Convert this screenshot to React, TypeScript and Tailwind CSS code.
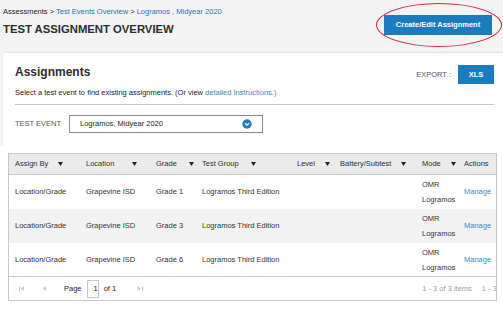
import React from 'react';

const rows = [
  { by: 'Location/Grade', loc: 'Grapevine ISD', grade: 'Grade 1', group: 'Logramos Third Edition' },
  { by: 'Location/Grade', loc: 'Grapevine ISD', grade: 'Grade 3', group: 'Logramos Third Edition' },
  { by: 'Location/Grade', loc: 'Grapevine ISD', grade: 'Grade 6', group: 'Logramos Third Edition' },
];

const cols = 'grid grid-cols-[71px_70px_46px_95px_43px_82px_42px_60px]';

function SortArrow({ gap = 'ml-[10px]' }: { gap?: string }) {
  return (
    <svg width="5" height="4" viewBox="0 0 5 4" className={`${gap} shrink-0`}>
      <path d="M0 0 H5 L2.5 4 Z" fill="#222" />
    </svg>
  );
}

function HeaderCell({ label, gap, arrow = true }: { label: string; gap?: string; arrow?: boolean }) {
  return (
    <div className="flex items-center pl-[6px] whitespace-nowrap">
      <span>{label}</span>
      {arrow && <SortArrow gap={gap} />}
    </div>
  );
}

function PagerIcon({ kind }: { kind: 'first' | 'prev' | 'next' }) {
  return (
    <svg width="6" height="5" viewBox="0 0 6 5">
      {kind === 'first' && (
        <>
          <rect x="0" y="0" width="1" height="5" fill="#c5ccd4" />
          <path d="M5 0 V5 L1.5 2.5 Z" fill="#c5ccd4" />
        </>
      )}
      {kind === 'prev' && <path d="M5 0 V5 L1.5 2.5 Z" fill="#c5ccd4" />}
      {kind === 'next' && (
        <>
          <path d="M0.5 0 V5 L4 2.5 Z" fill="#c5ccd4" />
          <rect x="5" y="0" width="1" height="5" fill="#c5ccd4" />
        </>
      )}
    </svg>
  );
}

export default function App() {
  return (
    <div className="relative w-[503px] h-[315px] overflow-hidden bg-[#f3f3f3] font-['Liberation_Sans',Arial,sans-serif] text-[#333]">
      {/* Page header */}
      <div className="flex justify-between h-[53px]">
        <div className="pl-[3px] pt-[7px]">
          <div className="text-[7.5px] leading-[10px] text-[#222] whitespace-nowrap">
            Assessments &gt; <span className="text-[#2a72b5]">Test Events Overview</span> &gt;{' '}
            <span className="text-[#2a72b5]">Logramos , Midyear 2020</span>
          </div>
          <h1 className="mt-[5px] text-[11.3px] leading-[14px] font-bold text-[#2e2e2e] whitespace-nowrap">
            TEST ASSIGNMENT OVERVIEW
          </h1>
        </div>
        <button className="mt-[15px] mr-[11px] h-[20px] w-[108px] bg-[#1b7bbf] text-white text-[7.5px] font-bold whitespace-nowrap">
          Create/Edit Assignment
        </button>
      </div>

      {/* Annotation ellipse */}
      <div className="absolute left-[376px] top-[3px] w-[126px] h-[44px] rounded-[50%] border-[1.5px] border-[#d52b2f] pointer-events-none" />

      {/* Assignments card */}
      <div className="ml-[3px] w-[510px] bg-white rounded-tl-[3px] shadow-[0_-1px_2px_rgba(0,0,0,0.06)] pl-[12px] pr-[19px] pt-[12px] pb-[13px]">
        <div className="flex items-start justify-between">
          <h2 className="text-[12px] leading-[14px] font-bold text-[#2e2e2e]">Assignments</h2>
          <div className="flex items-center h-[19px]">
            <span className="text-[7.5px] text-[#555] mr-[7px]">EXPORT :</span>
            <button className="h-[19px] w-[36px] bg-[#1b7bbf] text-white text-[7.5px] font-bold">XLS</button>
          </div>
        </div>
        <p className="mt-[4px] text-[7.5px] leading-[10px] text-[#222] whitespace-nowrap">
          Select a test event to find existing assignments. (Or view{' '}
          <span className="text-[#3c86c6]">detailed Instructions.)</span>
        </p>
        <div className="mt-[6px] h-px bg-[#c4c4c4]" />
        <div className="mt-[10px] flex items-center">
          <span className="w-[54px] text-[7.5px] text-[#555] whitespace-nowrap">TEST EVENT</span>
          <div className="flex items-center justify-between w-[194px] h-[18px] border border-[#8c8c8c] pl-[10px] pr-[10px]">
            <span className="text-[7.5px] text-[#222]">Logramos, Midyear 2020</span>
            <svg width="10" height="10" viewBox="0 0 10 10">
              <circle cx="5" cy="5" r="4.7" fill="#1e7cc4" />
              <path d="M3 4.2 L5 6.2 L7 4.2" stroke="#fff" strokeWidth="1.3" fill="none" />
            </svg>
          </div>
        </div>
      </div>

      {/* Table section */}
      <div className="bg-white h-[200px] pt-[7px] pl-[8px]">
        <div className="w-[489px] border border-[#c8c8c8] overflow-hidden text-[7.5px]">
          <div className={`${cols} h-[21px] bg-[#ebebeb] border-b border-[#c8c8c8] text-[#2e2e2e]`}>
            <HeaderCell label="Assign By" />
            <HeaderCell label="Location" gap="ml-[18px]" />
            <HeaderCell label="Grade" gap="ml-[12px]" />
            <HeaderCell label="Test Group" gap="ml-[12px]" />
            <HeaderCell label="Level" />
            <HeaderCell label="Battery/Subtest" />
            <HeaderCell label="Mode" />
            <HeaderCell label="Actions" arrow={false} />
          </div>
          {rows.map((r, i) => (
            <div
              key={r.grade}
              className={`${cols} h-[34px] items-center ${i === 1 ? 'bg-[#f2f2f2]' : 'bg-white'} ${i === 2 ? 'border-b border-[#c8c8c8]' : ''}`}
            >
              <div className="pl-[6px] whitespace-nowrap">{r.by}</div>
              <div className="pl-[6px] whitespace-nowrap">{r.loc}</div>
              <div className="pl-[6px] whitespace-nowrap">{r.grade}</div>
              <div className="pl-[6px] whitespace-nowrap">{r.group}</div>
              <div />
              <div />
              <div className="pl-[6px] leading-[15px] whitespace-nowrap">
                <div>OMR</div>
                <div>Logramos</div>
              </div>
              <div className="pl-[6px] text-[#3b87c9]">Manage</div>
            </div>
          ))}
          <div className="flex items-center h-[23px] whitespace-nowrap">
            <div className="ml-[10px]"><PagerIcon kind="first" /></div>
            <div className="ml-[16px]"><PagerIcon kind="prev" /></div>
            <span className="ml-[17px] text-[#222]">Page</span>
            <div className="ml-[5px] w-[26px] h-[18px] border border-[#c8c8c8] flex items-center pl-[6px] text-[#222]">1</div>
            <span className="ml-[5px] text-[#222]">of 1</span>
            <div className="ml-[21px]"><PagerIcon kind="next" /></div>
            <span className="ml-[279px] text-[#9a9a9a]">1 - 3 of 3 items</span>
            <span className="ml-[10px] text-[#9a9a9a]">1 - 3</span>
          </div>
        </div>
      </div>
    </div>
  );
}
